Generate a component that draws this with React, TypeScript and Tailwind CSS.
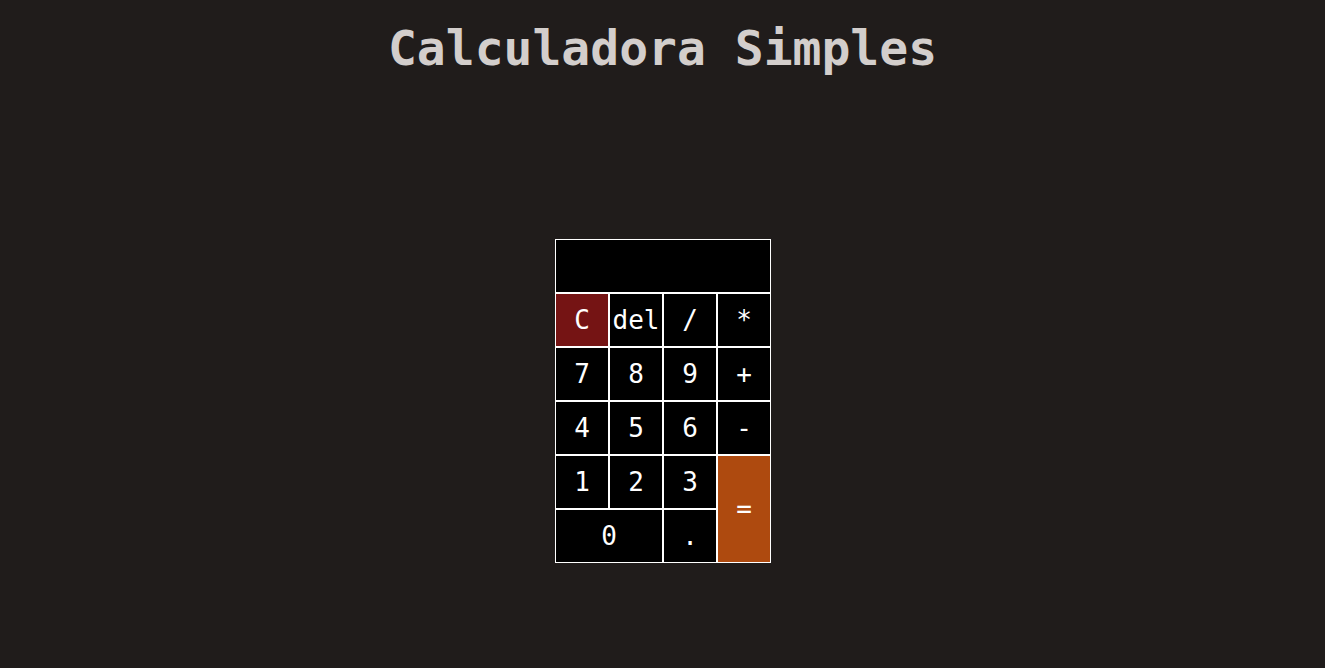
import React from "react";

const mono = { fontFamily: '"DejaVu Sans Mono", "Liberation Mono", monospace' };

function Btn({ label, className = "bg-black" }: { label: string; className?: string }) {
  return (
    <button
      className={`flex items-center justify-center border border-white text-[26px] text-white ${className}`}
      style={mono}
    >
      {label}
    </button>
  );
}

export default function App() {
  return (
    <div className="min-h-[668px] w-full bg-[#201c1b]" style={mono}>
      <h1 className="pt-[18px] text-center text-[48px] font-bold leading-[60px] text-[#d3cecc]">
        Calculadora Simples
      </h1>
      <div className="mt-[161px] flex justify-center pl-px">
        <div className="grid grid-cols-[repeat(4,54px)] grid-rows-[repeat(6,54px)]">
          <div className="col-span-4 border border-white bg-black" />
          <Btn label="C" className="bg-[#751414]" />
          <Btn label="del" />
          <Btn label="/" />
          <Btn label="*" />
          <Btn label="7" />
          <Btn label="8" />
          <Btn label="9" />
          <Btn label="+" />
          <Btn label="4" />
          <Btn label="5" />
          <Btn label="6" />
          <Btn label="-" />
          <Btn label="1" />
          <Btn label="2" />
          <Btn label="3" />
          <Btn label="=" className="row-span-2 bg-[#ae4a0f]" />
          <Btn label="0" className="col-span-2 bg-black" />
          <Btn label="." />
        </div>
      </div>
    </div>
  );
}
